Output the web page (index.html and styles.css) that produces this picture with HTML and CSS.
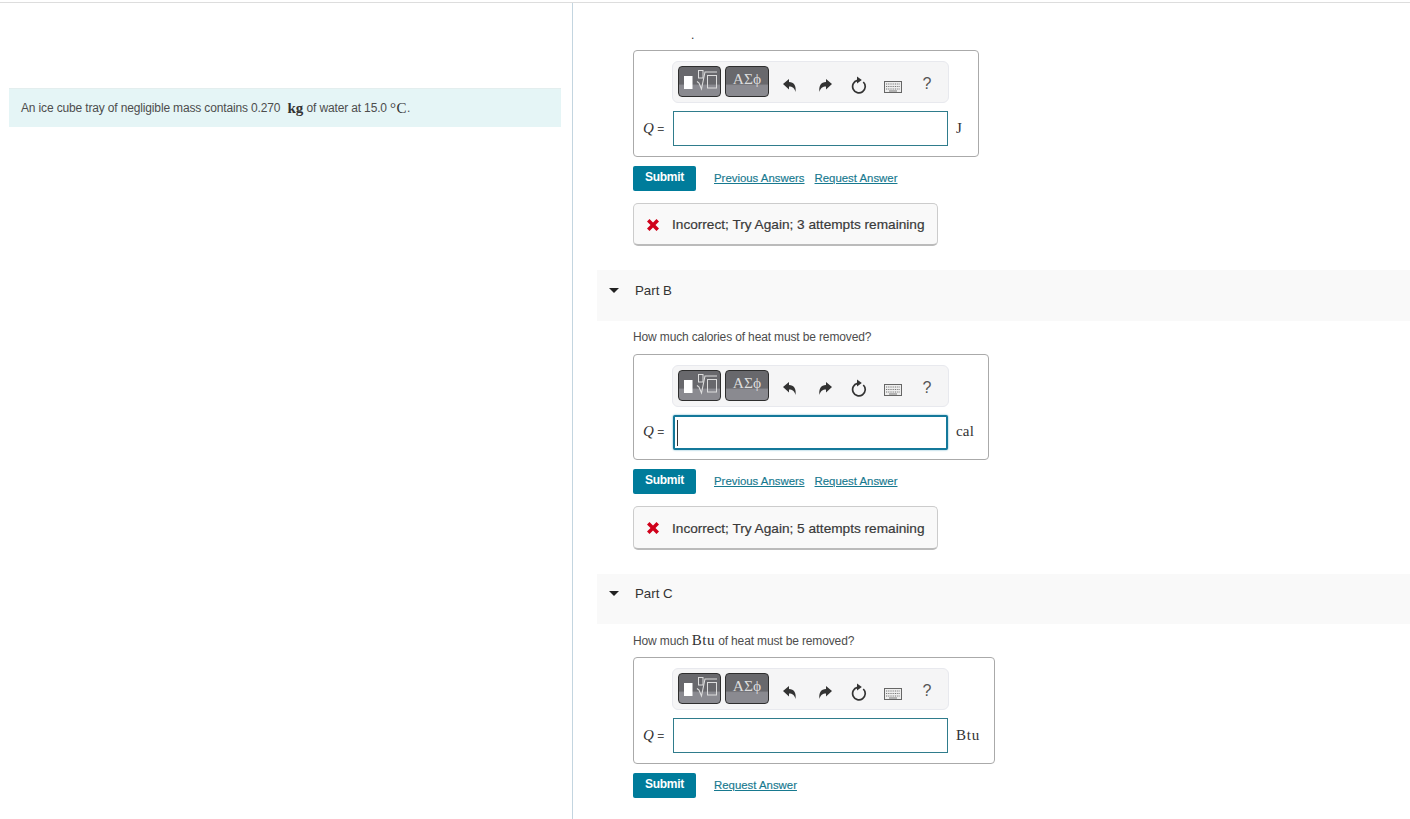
FILE: index.html
```html
<!DOCTYPE html>
<html lang="en">
<head>
<meta charset="utf-8">
<title>Part A, B, C</title>
<link rel="stylesheet" href="styles.css">
</head>
<body>
<svg class="defs" width="0" height="0" aria-hidden="true">
  <defs>
    <symbol id="i-tpl" viewBox="0 0 41 29">
      <rect x="5" y="9" width="8.500" height="13" fill="#fff"/>
      <rect x="19.500" y="3.500" width="4.500" height="7.500" fill="none" stroke="#ddd"/>
      <path d="M18 14.500l2 1.500 2.500 6 3.500-17h12" fill="none" stroke="#ddd" stroke-width="1.100"/>
      <rect x="28.500" y="8.500" width="9" height="12.500" fill="none" stroke="#ddd"/>
    </symbol>
    <symbol id="i-undo" viewBox="0 0 16 16">
      <path d="M1 7 7 2v3c5 0 7.500 4 6.500 10C12.500 11 10.500 9.500 7 9.500V12.500Z" fill="#333"/>
    </symbol>
    <symbol id="i-redo" viewBox="0 0 16 16">
      <path d="M15 7 9 2v3C4 5 1.500 9 2.500 15 3.500 11 5.500 9.500 9 9.500V12.500Z" fill="#333"/>
    </symbol>
    <symbol id="i-reload" viewBox="0 0 16 18">
      <path d="M12.300 6A6.300 6.300 0 1 1 6.500 4.400" fill="none" stroke="#333" stroke-width="1.700"/>
      <path d="M6 .5 10.800 4 6 7.500Z" fill="#333"/>
    </symbol>
    <symbol id="i-keys" viewBox="0 0 18 12">
      <rect x=".5" y=".5" width="17" height="11" fill="#eee" stroke="#666"/>
      <path d="M2 3h14M2 5.500h14M2 8h14" stroke="#777" stroke-width="1.200" stroke-dasharray="1 .8"/>
      <path d="M5 10h8" stroke="#777"/>
    </symbol>
    <symbol id="i-x" viewBox="0 0 14 14">
      <path d="M1 3.500 3.500 1 7 4.500 10.500 1 13 3.500 9.500 7 13 10.500 10.500 13 7 9.500 3.500 13 1 10.500 4.500 7Z" fill="#d0021b"/>
    </symbol>
  </defs>
</svg>
<div class="topline"></div>
<main class="split">
  <aside class="left">
    <p class="intro">An ice cube tray of negligible mass contains 0.270 <span class="math unit-kg">kg</span> of water at 15.0 <span class="math deg">°C</span>.</p>
  </aside>
  <section class="right">
    <div class="cut-dot">.</div>

    <div class="answer">
      <div class="toolbar">
        <span class="tbtn tbtn-tpl"><svg class="tpl"><use href="#i-tpl"/></svg></span>
        <span class="tbtn tbtn-sym">ΑΣϕ</span>
        <span class="tools">
          <svg class="ic"><use href="#i-undo"/></svg>
          <svg class="ic ic-redo"><use href="#i-redo"/></svg>
          <svg class="ic ic-reload"><use href="#i-reload"/></svg>
          <svg class="ic ic-keys"><use href="#i-keys"/></svg>
          <span class="help">?</span>
        </span>
      </div>
      <div class="row">
        <span class="lab"><i class="math q">Q</i> =</span>
        <div class="field"></div>
        <span class="math unit unit-j">J</span>
      </div>
    </div>
    <div class="actions">
      <span class="submit">Submit</span>
      <a class="link" href="#">Previous Answers</a>
      <a class="link" href="#">Request Answer</a>
    </div>
    <div class="fb"><svg class="fb-x"><use href="#i-x"/></svg>Incorrect; Try Again; 3 attempts remaining</div>

    <h2 class="part"><span class="caret"></span>Part B</h2>
    <p class="q-text">How much calories of heat must be removed?</p>
    <div class="answer">
      <div class="toolbar">
        <span class="tbtn tbtn-tpl"><svg class="tpl"><use href="#i-tpl"/></svg></span>
        <span class="tbtn tbtn-sym">ΑΣϕ</span>
        <span class="tools">
          <svg class="ic"><use href="#i-undo"/></svg>
          <svg class="ic ic-redo"><use href="#i-redo"/></svg>
          <svg class="ic ic-reload"><use href="#i-reload"/></svg>
          <svg class="ic ic-keys"><use href="#i-keys"/></svg>
          <span class="help">?</span>
        </span>
      </div>
      <div class="row">
        <span class="lab"><i class="math q">Q</i> =</span>
        <div class="field focus"><span class="cursor"></span></div>
        <span class="math unit unit-cal">cal</span>
      </div>
    </div>
    <div class="actions">
      <span class="submit">Submit</span>
      <a class="link" href="#">Previous Answers</a>
      <a class="link" href="#">Request Answer</a>
    </div>
    <div class="fb"><svg class="fb-x"><use href="#i-x"/></svg>Incorrect; Try Again; 5 attempts remaining</div>

    <h2 class="part"><span class="caret"></span>Part C</h2>
    <p class="q-text">How much <span class="math btu">Btu</span> of heat must be removed?</p>
    <div class="answer">
      <div class="toolbar">
        <span class="tbtn tbtn-tpl"><svg class="tpl"><use href="#i-tpl"/></svg></span>
        <span class="tbtn tbtn-sym">ΑΣϕ</span>
        <span class="tools">
          <svg class="ic"><use href="#i-undo"/></svg>
          <svg class="ic ic-redo"><use href="#i-redo"/></svg>
          <svg class="ic ic-reload"><use href="#i-reload"/></svg>
          <svg class="ic ic-keys"><use href="#i-keys"/></svg>
          <span class="help">?</span>
        </span>
      </div>
      <div class="row">
        <span class="lab"><i class="math q">Q</i> =</span>
        <div class="field"></div>
        <span class="math unit unit-btu">Btu</span>
      </div>
    </div>
    <div class="actions">
      <span class="submit">Submit</span>
      <a class="link" href="#">Request Answer</a>
    </div>
  </section>
</main>
</body>
</html>
```
FILE: styles.css
```css
* { box-sizing: border-box; }
html, body { margin: 0; height: 819px; overflow: hidden; background: #fff; }
body { font-family: "Liberation Sans", Arial, sans-serif; font-size: 12px; color: #4d4d4d; }
.defs { position: absolute; }
.topline { height: 3px; border-bottom: 1px solid #ddd; }
.split { display: flex; height: 816px; }
.left { width: 573px; flex: none; border-right: 1px solid #c3d5e0; padding: 85px 11px 0 9px; }
.intro { margin: 0; height: 39px; padding: 0 12px; display: flex; align-items: center; white-space: pre-wrap; letter-spacing: -.15px; background: #e5f5f6; border-top: 1px solid #e3eeee; }
.math { font-family: "Liberation Serif", "DejaVu Serif", serif; color: #333; }
.intro .math { font-size: 15px; letter-spacing: 0; }
.intro .unit-kg { font-weight: bold; margin: 0 0 0 4px; }
.intro .deg { letter-spacing: .5px; margin-left: 0; }
.right { flex: 1; min-width: 0; padding: 0 0 0 24px; }
.cut-dot { height: 47px; padding: 25px 0 0 94px; line-height: 14px; font-size: 12px; color: #333; }
.answer { margin-left: 36px; width: fit-content; height: 106.6px; border: 1px solid #aaa; border-radius: 4px; padding: 10px 14px 0 10px; background: #fff; }
.toolbar { margin-left: 28px; width: 277px; height: 42px; display: flex; align-items: flex-start; gap: 4px; padding: 4px 0 0 5px; background: #f5f5f6; border: 1px solid #e8e9ee; border-radius: 6px; }
.tbtn { height: 31px; border: 1px solid #2e2e2e; border-radius: 4px; background: linear-gradient(#68686c 0, #68686c 58%, #8a8a90 64%, #8a8a90 100%); color: #ddd; flex: none; }
.tbtn-tpl { width: 43px; }
.tbtn-sym { width: 44px; text-align: center; font-family: "Liberation Serif", serif; font-size: 15.5px; line-height: 24px; }
.tpl { width: 41px; height: 29px; display: block; }
.tools { display: flex; align-items: center; height: 37px; margin-left: 9px; }
.ic { width: 16px; height: 18px; margin-right: 19px; flex: none; display: block; }
.ic-redo { margin-right: 18px; }
.ic-reload { margin-right: 17px; }
.ic-keys { width: 18px; height: 12px; margin-top: 4px; margin-right: 18px; }
.help { font-size: 16px; color: #555; width: 14px; text-align: center; line-height: 20px; margin-top: -1px; }
.row { display: flex; align-items: center; margin-top: 8px; height: 35px; }
.lab { width: 30px; margin-left: -1px; font-size: 12px; color: #4d4d4d; white-space: nowrap; margin-top: -.6px; }
.q { font-size: 15px; }
.field { width: 275px; height: 35px; border: 1px solid #2f7c8c; background: #fff; }
.field.focus { border: 2px solid #14789a; border-radius: 2px; box-shadow: 0 0 2px #5aa9c4; padding: 3px 0 0 2px; }
.cursor { display: block; width: 1px; height: 26px; background: #333; }
.unit { margin-left: 8px; font-size: 15px; margin-top: -.6px; }
.unit-j { width: 8px; }
.unit-cal { width: 18px; letter-spacing: .2px; }
.unit-btu { width: 24px; letter-spacing: .8px; white-space: nowrap; }
.actions { display: flex; align-items: center; margin: 9px 0 0 36px; height: 25px; }
.submit { width: 63px; height: 25px; background: #007c9b; color: #fff; font-weight: bold; border-radius: 2px; text-align: center; line-height: 23px; letter-spacing: -.25px; }
.link { color: #17798f; font-size: 11.4px; margin-left: 10px; margin-top: -.8px; text-decoration: underline; -webkit-text-stroke: .15px #17798f; }
.submit + .link { margin-left: 18px; }
.fb { margin: 12px 0 0 36px; width: 305px; height: 43.4px; display: flex; align-items: center; padding: 2px 0 0 12px; background: #f9f9f9; border: 1px solid #ccc; border-bottom: 2px solid #bbb; border-radius: 5px; font-size: 13.65px; color: #3a3a3a; white-space: nowrap; -webkit-text-stroke: .2px #3a3a3a; }
.fb-x { width: 14px; height: 14px; margin-right: 12px; flex: none; }
.part { margin: 24px 0 0; height: 50.6px; padding: 12.8px 0 0 12px; background: #f9f9f9; font-size: 13.3px; font-weight: normal; color: #333; display: flex; align-items: flex-start; line-height: 16px; }
.caret { width: 0; height: 0; margin: 5px 16px 0 0; border: 5px solid transparent; border-top: 5px solid #222; border-bottom: 0; }
.q-text { margin: 0 0 0 36px; height: 33px; padding-top: 9px; line-height: 14px; letter-spacing: -.14px; }
.btu { font-size: 15px; letter-spacing: .5px; }
```
